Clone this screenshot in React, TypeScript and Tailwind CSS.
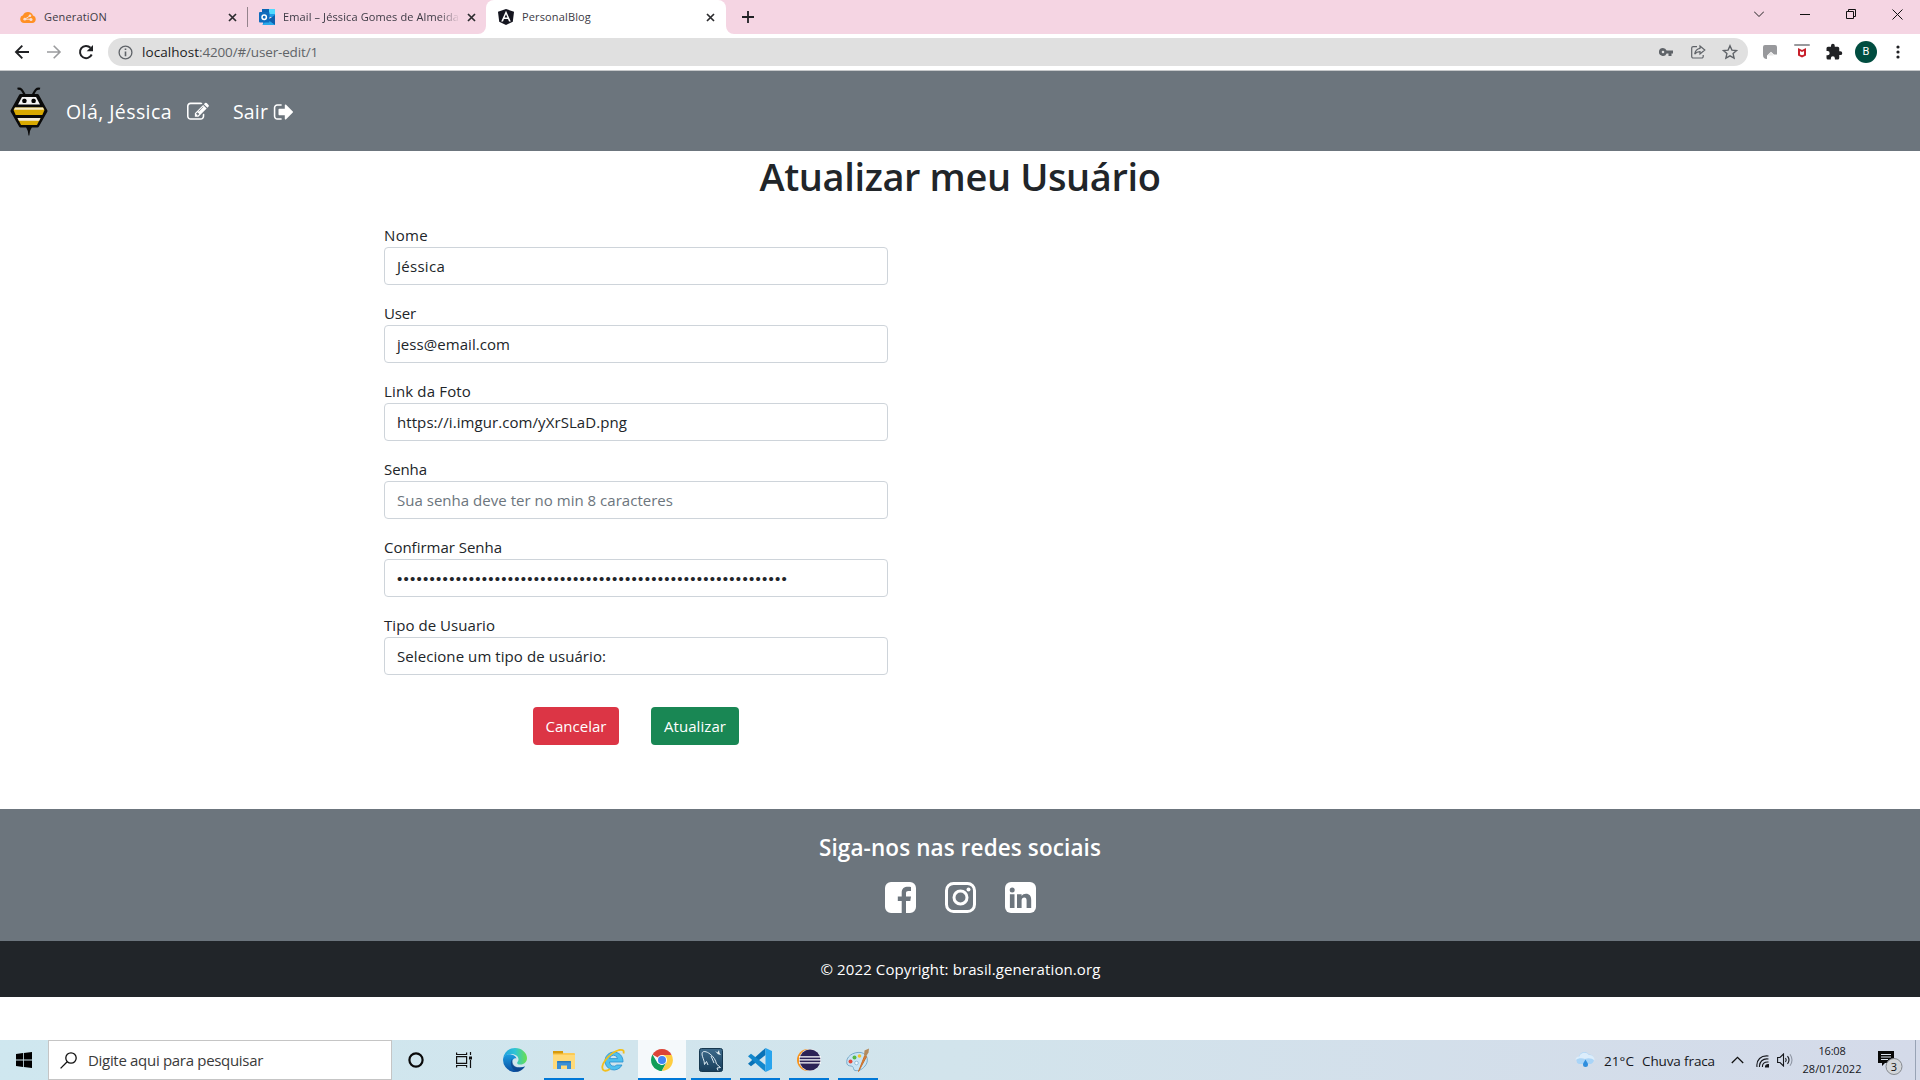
import { useLayoutEffect, useRef, useState } from "react";
import type { ReactNode } from "react";

/** One line of text, tracked so that it takes exactly `w` pixels. */
function Fit({ w, children, className = "" }: { w: number; children: string; className?: string }) {
  const ref = useRef<HTMLSpanElement>(null);
  const [spacing, setSpacing] = useState(0);
  useLayoutEffect(() => {
    const el = ref.current;
    if (!el) return;
    const natural = el.getBoundingClientRect().width - spacing * children.length;
    setSpacing((w - natural) / children.length);
  }, [w, children]);
  return (
    <span ref={ref} className={`inline-block whitespace-pre ${className}`} style={{ letterSpacing: spacing }}>
      {children}
    </span>
  );
}

function Close() {
  return (
    <svg className="size-[9px] shrink-0" viewBox="0 0 9 9">
      <path d="M1 1L8 8M8 1L1 8" stroke="#2b2b2e" strokeWidth="1.7" />
    </svg>
  );
}

function TabBar() {
  return (
    <div className="flex h-[34px] bg-[#f5d5e3] text-[11px] text-[#3c3a44]">
      <div className="flex w-[247px] items-center pl-5 pr-[10px]">
        <svg className="mr-2 size-4" viewBox="0 0 16 16">
          <path d="M4 14a4 4 0 0 1-1-7.8A5.4 5.4 0 0 1 13 6.4 3.9 3.9 0 0 1 12.300 14z" fill="#ff9025" />
          <path d="M4.800 10.200L10.500 6.500M4.800 10.200H11" stroke="#f8dfd5" strokeWidth="1" />
          <circle cx="4.800" cy="10.200" r="1.400" fill="#f8dfd5" />
          <circle cx="10" cy="6.700" r="1.300" fill="#f8dfd5" />
          <circle cx="11" cy="10.600" r="1.500" fill="#f8dfd5" />
        </svg>
        <Fit w={63}>GeneratiON</Fit>
        <div className="grow" />
        <Close />
      </div>
      <div className="mt-[7px] h-5 w-px bg-[#94838c]" />
      <div className="flex w-[238px] items-center pl-[11px] pr-[10px]">
        <svg className="mr-2 size-4" viewBox="0 0 16 16">
          <path d="M3 0h13v8H3z" fill="#1f9be6" />
          <path d="M10 0h6v5h-6z" fill="#50d9ff" />
          <path d="M3 0h7v4H3z" fill="#0a63b4" />
          <path d="M4 6l6 4.500L16 6v10H4z" fill="#1490df" />
          <path d="M16 6v10l-7-5z" fill="#0f5fae" />
          <path d="M3 16h13L9 11z" fill="#28a8ea" />
          <rect y="3" width="10.500" height="10.500" rx="1" fill="#0f6cbd" />
          <circle cx="5.200" cy="8.200" r="2.200" fill="none" stroke="#fff" strokeWidth="1.500" />
        </svg>
        <div className="w-[177px] [mask-image:linear-gradient(to_right,black_88%,transparent)]">
          <Fit w={176}>Email – Jéssica Gomes de Almeida</Fit>
        </div>
        <div className="grow" />
        <Close />
      </div>
      <div className="relative flex w-[240px] items-center rounded-t-lg bg-white pl-3 pr-[11px]">
        <svg className="absolute -left-2 bottom-0 size-2" viewBox="0 0 8 8">
          <path d="M8 0v8H0a8 8 0 0 0 8-8" fill="#fff" />
        </svg>
        <svg className="absolute -right-2 bottom-0 size-2" viewBox="0 0 8 8">
          <path d="M0 0v8h8a8 8 0 0 1-8-8" fill="#fff" />
        </svg>
        <svg className="mr-2 size-4" viewBox="0 0 16 16">
          <path d="M8 0l8 2.700-1.200 10L8 16l-6.800-3.300L0 2.700z" fill="#14151f" />
          <path d="M8 1.800L3.200 12.500H5l1-2.400h4l1 2.400h1.800zM8 5.300l1.400 3.300H6.600z" fill="#fff" />
        </svg>
        <Fit w={69}>PersonalBlog</Fit>
        <div className="grow" />
        <Close />
      </div>
      <svg className="ml-4 mt-[11px] size-3" viewBox="0 0 12 12">
        <path d="M6 0v12M0 6h12" stroke="#202124" strokeWidth="1.800" />
      </svg>
      <div className="grow" />
      <div className="mr-[17px] flex h-7 items-center gap-9">
        <svg className="size-[10px]" viewBox="0 0 10 10" fill="none" stroke="#222">
          <path d="M0 2.500l5 5 5-5" />
        </svg>
        <svg className="size-[10px]" viewBox="0 0 10 10" fill="none" stroke="#111">
          <path d="M0 5.500h10" />
        </svg>
        <svg className="size-[10px]" viewBox="0 0 10 10" fill="none" stroke="#111">
          <path d="M.5 2.500h7v7h-7zM2.500 2V.5h7v7H8" />
        </svg>
        <svg className="size-[11px]" viewBox="0 0 11 11" fill="none" stroke="#111">
          <path d="M.5.5l10 10M10.500.5l-10 10" />
        </svg>
      </div>
    </div>
  );
}

function AddressBar() {
  return (
    <div className="flex h-[37px] items-center border-b border-[#c6c8ca] bg-white pl-[14px] text-[13.5px]">
      <svg className="size-4" viewBox="0 0 16 16" fill="none" stroke="#202124" strokeWidth="1.900">
        <path d="M15 8H2.500M8.300 1.700L2 8l6.300 6.300" />
      </svg>
      <svg className="ml-4 size-4" viewBox="0 0 16 16" fill="none" stroke="#9b9c9e" strokeWidth="1.600">
        <path d="M1 8h12.500M7.700 1.700L14 8l-6.300 6.300" />
      </svg>
      <svg className="ml-4 size-4" viewBox="0 0 16 16">
        <path d="M13.700 10.500A6.100 6.100 0 1 1 12.500 3.800" fill="none" stroke="#202124" strokeWidth="2" />
        <path d="M15 1v6.300H8.700z" fill="#202124" />
      </svg>
      <div className="ml-[14px] flex h-7 w-[1640px] items-center rounded-full bg-[#e0e0e0] pl-[10px] pr-[10px]">
        <svg className="mr-[9px] size-[15px]" viewBox="0 0 15 15">
          <circle cx="7.500" cy="7.500" r="6.400" fill="none" stroke="#5f6368" strokeWidth="1.300" />
          <path d="M7.500 6.500v4.700M7.500 3.500v1.600" stroke="#5f6368" strokeWidth="1.600" />
        </svg>
        <Fit w={57} className="text-[#1c1c1e]">localhost</Fit>
        <Fit w={119} className="text-[#606468]">:4200/#/user-edit/1</Fit>
        <div className="grow" />
        <svg className="h-4 w-[14px]" viewBox="0 0 14 16">
          <path
            d="M4 4a4 4 0 1 0 3.600 5.500H9.500V12h3V9.500H14v-3H7.600A4 4 0 0 0 4 4zm0 2.700a1.300 1.300 0 1 1 0 2.600 1.300 1.300 0 0 1 0-2.600z"
            fill="#5f6368"
          />
        </svg>
        <svg className="ml-[17px] size-4" viewBox="0 0 16 16" fill="none" stroke="#5f6368" strokeWidth="1.200">
          <path d="M7 2.600H3.200A1.500 1.500 0 0 0 1.700 4.100v8.400A1.500 1.500 0 0 0 3.200 14h8.500a1.500 1.500 0 0 0 1.500-1.500V11" />
          <path d="M10 2l4.800 4L10 10V7.700c-2.500 0-4 .8-5.300 2.500C5.200 7 7 4.700 10 4.300z" />
        </svg>
        <svg className="ml-4 size-4" viewBox="0 0 16 16">
          <path
            d="M8 1.800l1.900 4.300 4.700.4-3.500 3.100 1 4.600L8 11.800l-4.100 2.400 1-4.600L1.400 6.500l4.700-.4z"
            fill="none"
            stroke="#5f6368"
            strokeWidth="1.400"
          />
        </svg>
      </div>
      <svg className="ml-[15px] h-4 w-[14px]" viewBox="0 0 14 16">
        <path d="M2 1h10a2 2 0 0 1 2 2v7.500h-3L8 7.800 4 11.500V15a4 4 0 0 1-4-4V3a2 2 0 0 1 2-2z" fill="#98999c" />
        <path d="M4.500 11.500L8 8.500l2.800 3z" fill="#e8e8e8" />
      </svg>
      <svg className="ml-[17px] size-4" viewBox="0 0 16 16">
        <rect y="0" width="16" height="2" rx="1" fill="#98999c" />
        <path d="M4 4l4 2 4-2v7.500L8 13.400l-4-1.900zM6 7v3.400l2 .9 2-.9V7L8 8.100z" fill="#c8202b" />
      </svg>
      <svg className="ml-[15px] size-[18px]" viewBox="0 0 24 24">
        <path
          d="M20.500 11H19V7a2 2 0 0 0-2-2h-4V3.500a2.500 2.500 0 0 0-5 0V5H4a2 2 0 0 0-2 2v3.800h1.500a2.700 2.700 0 0 1 0 5.400H2V20a2 2 0 0 0 2 2h3.800v-1.500a2.700 2.700 0 0 1 5.400 0V22H17a2 2 0 0 0 2-2v-4h1.500a2.500 2.500 0 0 0 0-5z"
          fill="#202124"
        />
      </svg>
      <div className="ml-3 flex size-[22px] items-center justify-center rounded-full bg-[#004d40] font-[Roboto] text-[11px] text-white">
        B
      </div>
      <svg className="ml-[19px] h-4 w-1" viewBox="0 0 4 16" fill="#202124">
        <circle cx="2" cy="3" r="1.600" />
        <circle cx="2" cy="8" r="1.600" />
        <circle cx="2" cy="13" r="1.600" />
      </svg>
    </div>
  );
}

function Bee() {
  return (
    <svg className="h-[50px] w-[38px]" viewBox="0 0 38 50">
      <path d="M7.500 2.800c3.500-1 5 1.500 7 5.700M30 2.800c-3.500-1-5 1.500-7 5.700" fill="none" stroke="#0a0a0a" strokeWidth="2.200" />
      <path d="M15.500 40h7l-2.500 5-.7 4.500h-.8L17.800 45z" fill="#0a0a0a" />
      <path d="M10.500 9.500h17l8.500 15.500-8.500 15h-17L2 25z" fill="#0a0a0a" stroke="#0a0a0a" strokeWidth="3" strokeLinejoin="round" />
      <path d="M12 11h14l4 7.500H8z" fill="#f4f4f4" />
      <rect x="12.300" y="12.800" width="4.200" height="4.200" rx="1.500" />
      <rect x="21.500" y="12.800" width="4.200" height="4.200" rx="1.500" />
      <path d="M5 21.500h28l1.500 2.500-2.200 5H5.700L3.500 24z" fill="#d9a900" />
      <path d="M5 21.500h28l1 2.200H4z" fill="#f6ecc9" />
      <path d="M7.500 32h23L27 39H11z" fill="#d9a900" />
      <path d="M7.500 32h23L29.200 34.800H8.800z" fill="#f3eddc" />
    </svg>
  );
}

function Navbar() {
  return (
    <nav className="flex h-20 items-center bg-[#6c757d] pl-[10px] text-[19.500px] text-white">
      <Bee />
      <Fit w={106} className="ml-[18px] pt-px">Olá, Jéssica</Fit>
      <svg className="ml-[15px] mt-px size-[22px]" viewBox="0 0 1792 1792" fill="#fff">
        <path d="M888 1184l116-116-152-152-116 116v56h96v96h56zm440-720q-16-16-33 1l-350 350q-17 17-1 33t33-1l350-350q17-17 1-33zm80 594v190q0 119-84.500 203.500t-203.500 84.500h-832q-119 0-203.500-84.500t-84.500-203.500v-832q0-119 84.500-203.500t203.500-84.500h832q63 0 117 25 15 7 18 23 3 17-9 29l-49 49q-14 14-32 8-23-6-45-6h-832q-66 0-113 47t-47 113v832q0 66 47 113t113 47h832q66 0 113-47t47-113v-126q0-13 9-22l64-64q15-15 35-7t20 29zm-96-738l288 288-672 672h-288v-288zm444 132l-92 92-288-288 92-92q28-28 68-28t68 28l152 152q28 28 28 68t-28 68z" />
      </svg>
      <Fit w={35} className="ml-6 pt-px">Sair</Fit>
      <svg className="ml-[5px] mt-px size-[22px]" viewBox="0 0 1792 1792" fill="#fff">
        <path d="M704 1440q0 4 1 20t.5 26.500-3 23.500-10 19.500-20.500 6.500h-320q-119 0-203.500-84.500t-84.500-203.500v-704q0-119 84.500-203.500t203.500-84.500h320q13 0 22.500 9.500t9.500 22.500q0 4 1 20t.5 26.500-3 23.500-10 19.500-20.500 6.500h-320q-66 0-113 47t-47 113v704q0 66 47 113t113 47h312l11.500 1 11.500 3 8 5.500 7 9 2 13.500zm928-544q0 26-19 45l-544 544q-19 19-45 19t-45-19-19-45v-288h-448q-26 0-45-19t-19-45v-384q0-26 19-45t45-19h448v-288q0-26 19-45t45-19 45 19l544 544q19 19 19 45z" />
      </svg>
    </nav>
  );
}

function Field({ label, lw, children }: { label: string; lw: number; children: ReactNode }) {
  return (
    <div className="flex flex-col">
      <div className="h-6 leading-6"><Fit w={lw}>{label}</Fit></div>
      <div className="flex h-[38px] items-center rounded border border-[#ced4da] pl-3">{children}</div>
    </div>
  );
}

function UserForm() {
  return (
    <main className="flex h-[658px] flex-col bg-white text-[15px] text-[#212529]">
      <h1 className="flex h-[52px] items-center justify-center pb-[2px] text-[38px] font-semibold">
        <Fit w={401}>Atualizar meu Usuário</Fit>
      </h1>
      <div className="ml-[384px] mt-5 flex w-[504px] flex-col gap-4">
        <Field label="Nome" lw={44}><Fit w={48}>Jéssica</Fit></Field>
        <Field label="User" lw={32}><Fit w={113}>jess@email.com</Fit></Field>
        <Field label="Link da Foto" lw={87}><Fit w={230}>https://i.imgur.com/yXrSLaD.png</Fit></Field>
        <Field label="Senha" lw={43}>
          <Fit w={276} className="text-[#6c757d]">Sua senha deve ter no min 8 caracteres</Fit>
        </Field>
        <Field label="Confirmar Senha" lw={118}>
          <Fit w={391} className="pt-[3px] font-['Liberation_Sans'] text-[15px]">{"•".repeat(60)}</Fit>
        </Field>
        <Field label="Tipo de Usuario" lw={111}><Fit w={209}>Selecione um tipo de usuário:</Fit></Field>
        <div className="mt-4 flex h-[38px] justify-center gap-8 text-white">
          <button className="flex w-[86px] items-center justify-center rounded bg-[#dc3545]"><Fit w={61}>Cancelar</Fit></button>
          <button className="flex w-[88px] items-center justify-center rounded bg-[#198754]"><Fit w={62}>Atualizar</Fit></button>
        </div>
      </div>
    </main>
  );
}

function Footer() {
  return (
    <footer className="flex flex-col text-white">
      <div className="flex h-[132px] flex-col items-center bg-[#6c757d] pt-6">
        <h5 className="h-[30px] text-[22.500px] font-semibold leading-[30px]">
          <Fit w={282}>Siga-nos nas redes sociais</Fit>
        </h5>
        <div className="mt-[19px] flex gap-[29px]">
          <svg className="size-[31px]" viewBox="0 0 31 31">
            <path d="M6 0h19a6 6 0 0 1 6 6v19a6 6 0 0 1-6 6h-4V19h4.300l.7-4.500h-5v-3.200c0-1.500.6-2.300 2.400-2.300H26V4.900c-5.600-.9-9.300.5-9.300 5.600v4H12.800V19h3.900v12H6a6 6 0 0 1-6-6V6a6 6 0 0 1 6-6z" fill="#fff" />
          </svg>
          <svg className="size-[31px]" viewBox="0 0 31 31" fill="none" stroke="#fff">
            <rect x="1.500" y="1.500" width="28" height="28" rx="7" strokeWidth="3" />
            <circle cx="15.500" cy="15.500" r="6.500" strokeWidth="3" />
            <circle cx="23.500" cy="7.500" r="2" fill="#fff" stroke="none" />
          </svg>
          <svg className="size-[31px]" viewBox="0 0 31 31">
            <rect width="31" height="31" rx="6" fill="#fff" />
            <circle cx="7.200" cy="8" r="2.500" fill="#6c757d" />
            <path d="M4.900 12.200h4.600v13.700H4.900zM12 12.200h4.600v1.900c1-1.500 2.500-2.300 4.400-2.300 3.300 0 5.200 2.200 5.200 6.200v7.900h-4.600v-7.300c0-1.900-.7-3-2.300-3s-2.700 1.200-2.700 3v7.300H12z" fill="#6c757d" />
          </svg>
        </div>
      </div>
      <div className="flex h-14 items-center justify-center bg-[#212529] pl-px text-[15px]">
        <Fit w={280}>© 2022 Copyright: brasil.generation.org</Fit>
      </div>
    </footer>
  );
}

function TaskCell({ open = false, active = false, children }: { open?: boolean; active?: boolean; children: ReactNode }) {
  return (
    <div className={`flex h-10 w-12 flex-col items-center ${active ? "bg-[#f5f9fb]" : ""}`}>
      <div className="flex h-[38px] items-center pt-[2px]">{children}</div>
      <div className={`h-[2px] ${active ? "w-12" : "w-10"} ${open ? "bg-[#0078d7]" : ""}`} />
    </div>
  );
}

function TaskIcons() {
  return (
    <div className="ml-[3px] flex gap-px">
      <TaskCell>
        <svg className="size-6" viewBox="0 0 24 24">
          <defs>
            <linearGradient id="edgeTop" x1="0" x2="1">
              <stop offset="0" stopColor="#1fa0df" />
              <stop offset=".5" stopColor="#2fc4d6" />
              <stop offset="1" stopColor="#6ae04c" />
            </linearGradient>
            <linearGradient id="edgeLow" x2="0" y2="1">
              <stop offset="0" stopColor="#1b9de2" />
              <stop offset="1" stopColor="#0b4fa0" />
            </linearGradient>
          </defs>
          <path d="M0 11C1 4 6 0 12 0c7 0 12 5 12 10 0 4-3 6.500-6.500 6.500-3 0-4-1.300-3-2.500 3-4-1-8-6-8C4.500 6 1 8 0 11z" fill="url(#edgeTop)" />
          <path d="M0 12c0-4 4-6.500 8-5.500 3 .5 5 2 5.500 4-2-1-4.500 1-4.500 4 0 4 5 6.500 13 4A12 12 0 0 1 0 12z" fill="url(#edgeLow)" />
          <path d="M9 11c-2.500 4-1 10 5 12.800C17 23.500 20 21.500 22 18.500c-5 2-12 1-12.500-4.500z" fill="#0a3f86" opacity=".7" />
        </svg>
      </TaskCell>
      <TaskCell open>
        <svg className="h-[18px] w-[22px]" viewBox="0 0 22 18">
          <path d="M1 0h8l1.500 2H21a1 1 0 0 1 1 1v15H0V1a1 1 0 0 1 1-1z" fill="#fcca55" />
          <path d="M0 0h10v2.500H0z" fill="#d79a0b" />
          <path d="M0 4h22v14H0z" fill="#ffda79" />
          <path d="M4 18v-8h14v8h-4v-3.500H8V18z" fill="#3a8fd6" />
          <path d="M5 10h12l1 1.500H4z" fill="#2877b8" />
        </svg>
      </TaskCell>
      <TaskCell>
        <svg className="size-6" viewBox="0 0 24 24">
          <path d="M12.500 4A9 9 0 1 0 21 17h-5.200a4.300 4.300 0 0 1-7.300-3H22c.3-6-4-10-9.500-10zM8.600 10.600a4 4 0 0 1 7.900 0z" fill="#4fc0ee" stroke="#268fcf" strokeWidth=".8" />
          <path d="M3 22.500C-3 19 8 5 18 2c5-1 5 1.500 4.500 3.500M3 22.500c2 .8 4-.2 6-1.500" fill="none" stroke="#f3bf1c" strokeWidth="1.800" />
        </svg>
      </TaskCell>
      <TaskCell open active>
        <svg className="size-[22px]" viewBox="0 0 22 22">
          <path d="M11 11L1.500 5.500a11 11 0 0 1 19 0z" fill="#dc4437" />
          <path d="M11 6h9.700A11 11 0 0 1 11 22l4.500-8.500z" fill="#fecd41" />
          <path d="M1.500 5.500L6.500 14l4.500 2-0.500 6A11 11 0 0 1 1.500 5.500z" fill="#109d58" />
          <path d="M15.300 13.500L10.700 22 8 21.500l3-6z" fill="#109d58" />
          <circle cx="11" cy="11" r="5" fill="#fff" />
          <circle cx="11" cy="11" r="4" fill="#4486f4" />
        </svg>
      </TaskCell>
      <TaskCell open>
        <svg className="size-6" viewBox="0 0 24 24">
          <defs>
            <linearGradient id="wb" x2="0" y2="1">
              <stop stopColor="#3e6b8c" />
              <stop offset="1" stopColor="#173d5a" />
            </linearGradient>
          </defs>
          <rect x=".5" y=".5" width="23" height="23" rx="2" fill="url(#wb)" stroke="#17384f" />
          <path
            d="M5.500 16.500C5.500 12 3 9 3 6c0-4 5-2.500 8 0 4 3 5.500 6 6.500 10l4 3.500-3.500.5 1 2.500M5.500 16.500l2-3 1.500 3.500M12 8l3 7"
            fill="none"
            stroke="#dbe9f1"
            strokeWidth="1"
          />
          <path d="M16 3l2.500 1.500L20 2l.5 3L22 7l-3-.8z" fill="#e7f1f5" />
        </svg>
      </TaskCell>
      <TaskCell open>
        <svg className="size-6" viewBox="0 0 24 24">
          <path d="M17.500 0v7L3 18.200l-3-2.400z" fill="#0872b7" />
          <path d="M17.500 24v-7L3 5.800 0 8.200z" fill="#1287cc" />
          <path d="M17.500 0L24 3v18l-6.500 3z" fill="#28a4ed" />
        </svg>
      </TaskCell>
      <TaskCell open>
        <svg className="size-6" viewBox="0 0 24 24">
          <circle cx="11" cy="12" r="11" fill="#f7941e" />
          <circle cx="13" cy="12" r="11" fill="#e8eaf0" />
          <circle cx="13" cy="12" r="10.500" fill="#2c2255" />
          <path d="M2 8.800h22M2 11.800h22M2 14.800h22" stroke="#fff" strokeWidth="1.200" />
        </svg>
      </TaskCell>
      <TaskCell open>
        <svg className="size-6" viewBox="0 0 24 24">
          <path d="M1 16C-1 9 7 3.500 15 4.500c7 1.500 8 9 4 13.500-3 4-7 5-10 4.500-2-.5-1-3-2.500-4S2 18.500 1 16z" fill="#c9e4f4" stroke="#7baccb" />
          <circle cx="4.500" cy="13.500" r="2" fill="#e24a3b" />
          <circle cx="8.500" cy="9.500" r="2" fill="#55b947" />
          <circle cx="13.500" cy="8" r="1.800" fill="#f4c52c" />
          <circle cx="10.500" cy="15" r="1.800" fill="#f5fbff" stroke="#7baccb" strokeWidth=".7" />
          <path d="M12.500 23.500L18.500 8l2 .7z" fill="#d9813a" stroke="#c9702c" />
          <path d="M18 7.500l.5-5 4.500-2-.5 4-2.500 4z" fill="#b48a5c" />
        </svg>
      </TaskCell>
    </div>
  );
}

function Tray() {
  return (
    <div className="flex h-10 items-center text-[13.500px] text-[#15171c]">
      <svg className="size-5" viewBox="0 0 20 20">
        <path d="M4 14A4 4 0 0 1 4 6.500 5.500 5.500 0 0 1 14 4.500a5 5 0 0 1 2 9.500z" fill="#a9d4f7" />
        <path d="M.5 10a3.800 3.800 0 0 1 3.800-3.500A5.500 5.500 0 0 1 14 5a5 5 0 0 1 5.500 5.500C17 8 13 7.500 10 9 7 7.500 3 8 .5 10z" fill="#dcedfb" />
        <path d="M10.500 9.500c1.500 2.500 2.500 3.700 2.500 5a2.500 2.500 0 0 1-5 0c0-1.300 1-2.500 2.500-5z" fill="#2f8ede" />
      </svg>
      <Fit w={30} className="ml-[9px] pt-[2px]">21°C</Fit>
      <Fit w={73} className="ml-[8px] pt-[2px]">Chuva fraca</Fit>
      <svg className="ml-4 h-3 w-[13px]" viewBox="0 0 13 12" fill="none" stroke="#111" strokeWidth="1.300">
        <path d="M.8 9l5.700-5.700L12.200 9" />
      </svg>
      <svg className="ml-3 mt-px h-[14px] w-[13px]" viewBox="0 0 13 14" fill="none" stroke="#15171c" strokeWidth="1.100">
        <path d="M1 13C0 6 5 1 12.500 2M3.500 13C3 8 7 4 12.500 5M6.500 13C6 10 8.500 7.500 12.500 8" />
        <path d="M9.500 13c0-1.500 1-2.500 3-2.500V13z" fill="#15171c" />
      </svg>
      <svg className="ml-2 h-[14px] w-4" viewBox="0 0 16 14" fill="none" stroke="#15171c" strokeWidth="1.100">
        <path d="M.6 4.500H3L6.500 1v12L3 9.500H.6z" />
        <path d="M8.500 5q1.500 2 0 4M10.500 3.200q3 3.800 0 7.600" />
        <path d="M13 1.200q4 5.800 0 11.600" stroke="#9097a5" />
      </svg>
      <div className="ml-[9px] flex w-[60px] flex-col items-center text-[11px] leading-[18px]">
        <Fit w={27}>16:08</Fit>
        <Fit w={59}>28/01/2022</Fit>
      </div>
      <svg className="ml-[16px] mt-[2px] h-7 w-[25px]" viewBox="0 0 25 28">
        <path d="M0 4h16v12H7l-3 3v-3H0z" fill="#080808" />
        <path d="M3 7.500h10M3 10h10M3 12.500h7" stroke="#dce4ef" />
        <circle cx="16" cy="19.500" r="8" fill="#d3d6da" stroke="#85898f" />
        <text x="16" y="23.500" textAnchor="middle" fontSize="11" fontFamily="Open Sans, sans-serif" fill="#111">3</text>
      </svg>
      <div className="ml-[12px] h-10 w-px bg-[#98a3b5]" />
      <div className="w-1" />
    </div>
  );
}

function Taskbar() {
  return (
    <div className="mt-[43px] flex h-10 bg-gradient-to-r from-[#cfe7ef] via-[#d2e4ec] to-[#d4dae9]">
      <div className="flex w-12 items-center justify-center">
        <svg className="size-4" viewBox="0 0 16 16">
          <path d="M0 2l7-1v6.600H0zM7.800.9L16 0v7.600H7.800zM0 8.400h7V15l-7-1zM7.800 8.400H16V16l-8.200-1z" />
        </svg>
      </div>
      <div className="flex w-[344px] items-center border border-[#c5c5c5] bg-white pl-[11px] text-[15px] text-[#3a3a3a]">
        <svg className="mr-[11px] size-[17px]" viewBox="0 0 17 17" fill="none" stroke="#111" strokeWidth="1.300">
          <circle cx="11" cy="6" r="5.200" />
          <path d="M7.200 9.800L.6 16.400" />
        </svg>
        <Fit w={175}>Digite aqui para pesquisar</Fit>
      </div>
      <div className="flex w-12 items-center justify-center">
        <svg className="size-4" viewBox="0 0 16 16">
          <circle cx="8" cy="8" r="6.600" fill="none" stroke="#0a0a0a" strokeWidth="2.200" />
        </svg>
      </div>
      <div className="flex w-12 items-center justify-center">
        <svg className="size-4" viewBox="0 0 16 16" fill="none" stroke="#111" strokeWidth="1.200">
          <path d="M.6 4.600h10v6.800H.6zM.6.500v2h10v-2M.6 15.500v-2h10v2M14.500 0v3M14.500 8v8" />
          <path d="M13 4.500h3v3h-3z" fill="#111" stroke="none" />
        </svg>
      </div>
      <TaskIcons />
      <div className="grow" />
      <Tray />
    </div>
  );
}

export default function App() {
  return (
    <div className="flex h-[1080px] w-[1920px] flex-col overflow-hidden bg-white font-['Open_Sans',sans-serif]">
      <TabBar />
      <AddressBar />
      <Navbar />
      <UserForm />
      <Footer />
      <Taskbar />
    </div>
  );
}
